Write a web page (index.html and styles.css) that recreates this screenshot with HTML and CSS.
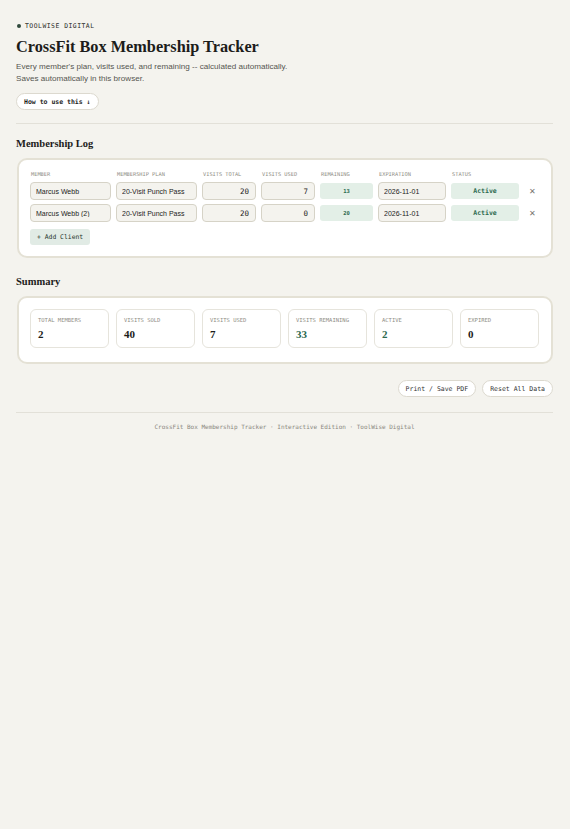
FILE: index.html
```html
<!DOCTYPE html>
<html lang="en">
<head>
    <meta charset="UTF-8">
    <meta name="viewport" content="width=device-width, initial-scale=1.0">
    <title>CrossFit Box Membership Tracker</title>
    <link rel="stylesheet" href="styles.css">
</head>
<body>
    <div class="page">
        <header class="top">
            <div class="brand"><span class="dot"></span>TOOLWISE DIGITAL</div>
            <h1>CrossFit Box Membership Tracker</h1>
            <p class="lead">Every member's plan, visits used, and remaining -- calculated automatically.<br>Saves automatically in this browser.</p>
            <button class="pill strong">How to use this ↓</button>
        </header>

        <h2>Membership Log</h2>
        <div class="card log">
            <div class="grid head">
                <span>Member</span>
                <span>Membership Plan</span>
                <span>Visits Total</span>
                <span>Visits Used</span>
                <span>Remaining</span>
                <span>Expiration</span>
                <span>Status</span>
                <span></span>
            </div>
            <div id="rows"></div>
            <button class="add" id="addBtn">+ Add Client</button>
        </div>

        <h2>Summary</h2>
        <div class="card summary">
            <div class="stat"><div class="label">Total Members</div><div class="value" id="sMembers">2</div></div>
            <div class="stat"><div class="label">Visits Sold</div><div class="value" id="sSold">40</div></div>
            <div class="stat"><div class="label">Visits Used</div><div class="value" id="sUsed">7</div></div>
            <div class="stat"><div class="label">Visits Remaining</div><div class="value green" id="sLeft">33</div></div>
            <div class="stat"><div class="label">Active</div><div class="value green" id="sActive">2</div></div>
            <div class="stat"><div class="label">Expired</div><div class="value" id="sExpired">0</div></div>
        </div>

        <div class="actions">
            <button class="pill">Print / Save PDF</button>
            <button class="pill">Reset All Data</button>
        </div>

        <footer>CrossFit Box Membership Tracker · Interactive Edition · ToolWise Digital</footer>
    </div>

    <script>
        const members = [
            { name: "Marcus Webb", plan: "20-Visit Punch Pass", total: 20, used: 7, exp: "2026-11-01" },
            { name: "Marcus Webb (2)", plan: "20-Visit Punch Pass", total: 20, used: 0, exp: "2026-11-01" }
        ];

        function render() {
            const rows = document.getElementById('rows');
            rows.innerHTML = "";
            members.forEach(m => {
                const row = document.createElement('div');
                row.className = 'grid row';
                row.innerHTML = `
                    <input type="text" value="${m.name}">
                    <input type="text" value="${m.plan}">
                    <input type="text" class="num" value="${m.total}">
                    <input type="text" class="num" value="${m.used}">
                    <span class="remain">${m.total - m.used}</span>
                    <input type="text" value="${m.exp}">
                    <span class="status">Active</span>
                    <span class="del">✕</span>
                `;
                rows.appendChild(row);
            });
        }

        render();
    </script>
</body>
</html>
```

FILE: styles.css
```css
body {
    margin: 0;
    background-color: #f4f3ee;
    font-family: "Liberation Sans", Arial, sans-serif;
    color: #1c1c1a;
}

.page {
    padding: 22px 17px 20px 16px;
}

.brand {
    display: flex;
    align-items: center;
    gap: 4px;
    height: 8px;
    font-family: "DejaVu Sans Mono", monospace;
    font-size: 6.4px;
    letter-spacing: 0.5px;
    color: #2b2b28;
    margin-left: 1px;
}

.dot {
    width: 4px;
    height: 4px;
    border-radius: 50%;
    background: #2f4a3c;
}

h1 {
    font-family: "Liberation Serif", serif;
    font-size: 16.3px;
    line-height: 19px;
    margin: 7px 0 5px;
}

.lead {
    font-size: 8.1px;
    line-height: 12px;
    color: #555550;
    margin: 0 0 8px;
}

.top {
    padding-bottom: 13px;
    border-bottom: 1px solid #e2e0d8;
    margin-bottom: 13px;
}

.pill {
    display: block;
    font-family: "DejaVu Sans Mono", monospace;
    font-size: 6.5px;
    background: #fff;
    border: 1px solid #dcd9cf;
    border-radius: 10px;
    padding: 0 7px;
    height: 17px;
    color: #333;
}

.pill.strong {
    font-weight: bold;
    color: #1e1e1c;
}

h2 {
    font-family: "Liberation Serif", serif;
    font-size: 10.5px;
    line-height: 14px;
    margin: 0 0 7px;
}

.card {
    background: #fff;
    border: 2px solid #e4e1d5;
    border-radius: 10px;
    margin-left: 1px;
}

.log {
    padding: 11px 11px 11px;
    margin-bottom: 17px;
}

.grid {
    display: grid;
    grid-template-columns: 81px 81px 54px 54px 53px 68px 68px 1fr;
    column-gap: 5px;
}

.head span {
    font-family: "DejaVu Sans Mono", monospace;
    font-size: 5.3px;
    line-height: 6px;
    text-transform: uppercase;
    color: #8f8d85;
    padding-left: 1px;
    margin-bottom: 5px;
}

.row {
    margin-bottom: 4px;
    align-items: center;
}

.row input {
    box-sizing: border-box;
    height: 18px;
    width: 100%;
    background: #f4f3ee;
    border: 1px solid #d6d3c7;
    border-radius: 4px;
    padding: 0 5px;
    font-family: "Liberation Sans", Arial, sans-serif;
    font-size: 7px;
    color: #1c1c1a;
}

.row input.num {
    text-align: right;
    font-family: "DejaVu Sans Mono", monospace;
    font-size: 7.5px;
    padding-right: 6px;
}

.remain,
.status {
    height: 16px;
    line-height: 16px;
    text-align: center;
    background: #e3efe7;
    border-radius: 3px;
    color: #2d6a4f;
    font-family: "DejaVu Sans Mono", monospace;
    font-weight: bold;
}

.remain {
    font-size: 5.5px;
}

.status {
    font-size: 6.5px;
}

.del {
    text-align: center;
    color: #77756e;
    font-size: 8px;
}

.add {
    display: block;
    margin-top: 7px;
    height: 16px;
    padding: 0 7px;
    background: #e1ebe5;
    border: none;
    border-radius: 3px;
    font-family: "DejaVu Sans Mono", monospace;
    font-size: 6.4px;
    color: #27362e;
}

.summary {
    display: grid;
    grid-template-columns: repeat(6, 1fr);
    gap: 7px;
    padding: 11px 12px 14px 11px;
    margin-bottom: 16px;
}

.stat {
    border: 1px solid #e6e4dc;
    border-radius: 6px;
    padding: 7px 7px 6px;
    height: 24px;
}

.label {
    font-family: "DejaVu Sans Mono", monospace;
    font-size: 5.5px;
    text-transform: uppercase;
    color: #8f8d85;
    margin-bottom: 5px;
}

.value {
    font-family: "Liberation Serif", serif;
    font-weight: bold;
    font-size: 11px;
    color: #1c1c1a;
}

.value.green {
    color: #2d6a4f;
}

.actions {
    display: flex;
    justify-content: flex-end;
    gap: 6px;
    padding-bottom: 15px;
    border-bottom: 1px solid #e2e0d8;
    margin-bottom: 10px;
}

footer {
    text-align: center;
    font-family: "DejaVu Sans Mono", monospace;
    font-size: 6px;
    color: #8a8880;
}
```
